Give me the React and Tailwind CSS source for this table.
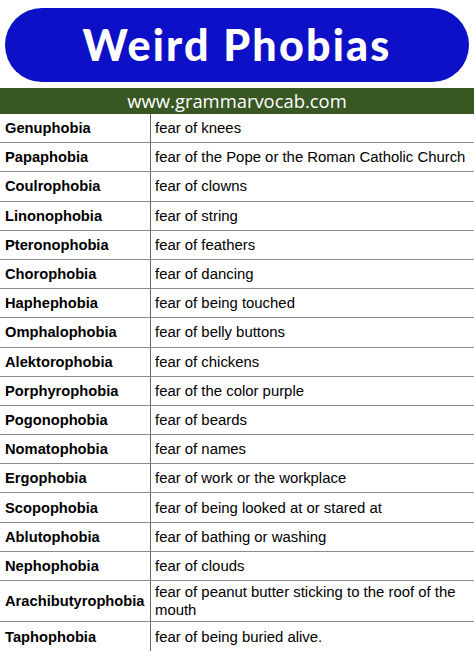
const PHOBIAS = [
  ['Genuphobia', 'fear of knees'],
  ['Papaphobia', 'fear of the Pope or the Roman Catholic Church'],
  ['Coulrophobia', 'fear of clowns'],
  ['Linonophobia', 'fear of string'],
  ['Pteronophobia', 'fear of feathers'],
  ['Chorophobia', 'fear of dancing'],
  ['Haphephobia', 'fear of being touched'],
  ['Omphalophobia', 'fear of belly buttons'],
  ['Alektorophobia', 'fear of chickens'],
  ['Porphyrophobia', 'fear of the color purple'],
  ['Pogonophobia', 'fear of beards'],
  ['Nomatophobia', 'fear of names'],
  ['Ergophobia', 'fear of work or the workplace'],
  ['Scopophobia', 'fear of being looked at or stared at'],
  ['Ablutophobia', 'fear of bathing or washing'],
  ['Nephophobia', 'fear of clouds'],
  ['Arachibutyrophobia', 'fear of peanut butter sticking to the roof of the mouth'],
  ['Taphophobia', 'fear of being buried alive.'],
]

export default function App() {
  return (
    <div className="w-[474px] h-[651px] overflow-hidden bg-white">
      {/* Title pill */}
      <div className="px-[5px] pt-[8px]">
        <div className="flex h-[74px] items-center justify-center rounded-full bg-[#0d10c6]">
          <h1 className="font-['Lato',sans-serif] text-[43px] font-black tracking-[2.2px] text-white">
            Weird Phobias
          </h1>
        </div>
      </div>

      {/* Site banner */}
      <div className="mt-[6px] flex h-[26px] items-center justify-center bg-[#385723]">
        <span className="font-['Open_Sans',sans-serif] text-[18.4px] leading-none text-white">www.grammarvocab.com</span>
      </div>

      {/* Table */}
      <div className="font-['Liberation_Sans',Arial,sans-serif] text-black">
        {PHOBIAS.map(([name, desc], i) => (
          <div
            key={name}
            className={
              'grid grid-cols-[151px_1fr] ' +
              (i < PHOBIAS.length - 1 ? 'border-b border-[#8c8c8c] ' : '') +
              (desc.length > 50 ? 'h-[41px]' : 'h-[29.2px]')
            }
          >
            <div className="flex items-center border-r border-[#666] pl-[5px] text-[14.7px] font-bold">{name}</div>
            <div className="flex items-center pl-[4px] pr-2 text-[14.9px] leading-[18px]">{desc}</div>
          </div>
        ))}
      </div>
    </div>
  )
}
